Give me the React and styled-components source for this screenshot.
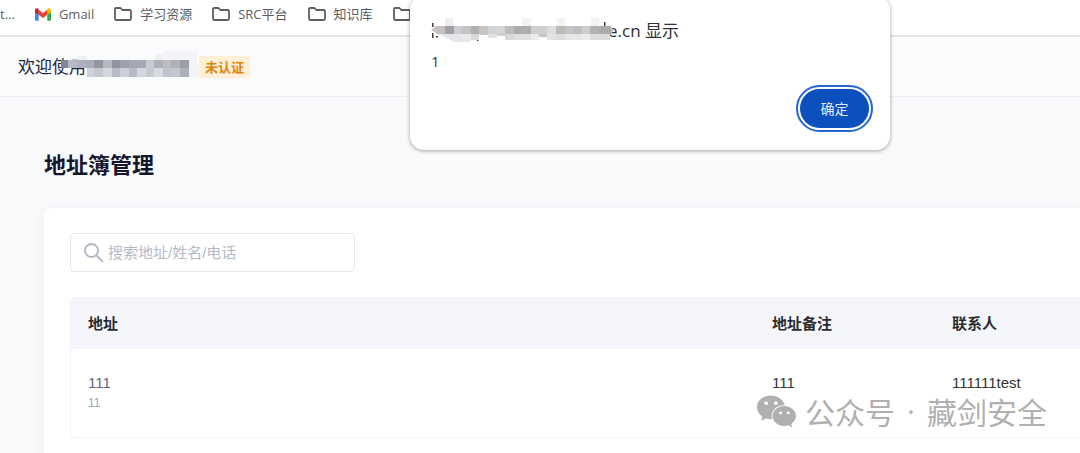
import React from "react";
import styled, { createGlobalStyle } from "styled-components";
import { FaWeixin } from "react-icons/fa";

const bookmarks = ["学习资源", "SRC平台", "知识库", "工具"];

const addresses = [{ id: 1, address: "111", detail: "11", remark: "111", contact: "111111test" }];

// [x, y, width, height, color]
const siteNameBlocks = [
  [94, 3, 34, 6, "#f0f1f4"],
  [102, 0, 34, 9, "#f3f4f7"],
  [119, 9, 18, 17, "#f3f4f6"],
  [17, 5, 9, 4, "#eef0f3"],
  [0, 9, 7, 8, "#85858f"],
  [7, 9, 9, 8, "#b6b9c6"],
  [16, 9, 8, 8, "#aeb1bd"],
  [24, 9, 9, 8, "#abadb9"],
  [33, 9, 9, 8, "#94949f"],
  [42, 9, 9, 8, "#b5b8c4"],
  [51, 9, 8, 8, "#92939e"],
  [59, 9, 9, 8, "#9da0ac"],
  [68, 9, 17, 8, "#a6a9b4"],
  [85, 9, 8, 8, "#c9cbd1"],
  [93, 9, 9, 8, "#aeb0b9"],
  [102, 9, 8, 8, "#c0bbc2"],
  [110, 9, 9, 8, "#adb1bb"],
  [26, 17, 7, 9, "#ccd2dd"],
  [33, 17, 9, 9, "#c3c7d0"],
  [42, 17, 9, 9, "#d5d7dd"],
  [51, 17, 8, 9, "#b8bcc8"],
  [59, 17, 9, 9, "#cbcfd7"],
  [68, 17, 8, 9, "#b8bbc5"],
  [76, 17, 9, 9, "#d5d7dd"],
  [85, 17, 8, 9, "#c8cad1"],
  [93, 17, 9, 9, "#d9dae0"],
  [102, 17, 8, 9, "#c1c3cc"],
  [110, 17, 9, 9, "#c2c6cf"],
  [119, 9, 9, 8, "#9b9da7"],
  [119, 17, 9, 9, "#adb0bb"],
];

const hostBlocks = [
  [14, 0, 8, 8, "#eeeeef"],
  [91, 0, 9, 8, "#f2f2f3"],
  [126, 0, 8, 8, "#f2f2f3"],
  [160, 0, 8, 8, "#f2f2f3"],
  [5, 8, 9, 8, "#c6c1be"],
  [14, 8, 9, 8, "#a0a2aa"],
  [23, 8, 8, 8, "#cccdd1"],
  [31, 8, 9, 8, "#c5c3c1"],
  [40, 8, 8, 8, "#afb0b3"],
  [48, 8, 9, 8, "#c7c4c1"],
  [57, 8, 9, 8, "#cfd2d7"],
  [66, 8, 8, 8, "#d7d5d3"],
  [74, 8, 9, 8, "#bdbdbe"],
  [83, 8, 17, 8, "#acadaf"],
  [100, 8, 16, 8, "#cdced0"],
  [116, 8, 9, 8, "#dcdde0"],
  [125, 8, 9, 8, "#bdb9b6"],
  [134, 8, 8, 8, "#c1c4ca"],
  [142, 8, 9, 8, "#bebebe"],
  [151, 8, 8, 8, "#cecdca"],
  [159, 8, 9, 8, "#b1b2b4"],
  [168, 8, 12, 8, "#a9abad"],
  [31, 16, 9, 8, "#ebe9e8"],
  [40, 16, 8, 6, "#d8d9db"],
  [57, 16, 9, 4, "#e0e2e5"],
  [74, 16, 9, 6, "#d9d9d9"],
  [83, 16, 17, 6, "#e0e0e1"],
  [100, 16, 8, 6, "#eceae8"],
  [116, 16, 9, 6, "#e3e3e5"],
  [125, 16, 9, 6, "#dedddc"],
  [134, 16, 17, 6, "#e7e7e8"],
  [151, 16, 8, 6, "#edecea"],
  [159, 16, 20, 6, "#dcdcdd"],
];

const Blocks = ({ data }) =>
  data.map(([x, y, w, h, fill], index) => <rect key={index} x={x} y={y} width={w} height={h} fill={fill} />);

const GmailIcon = () => (
  <svg width="16" height="13" viewBox="0 0 16 13" aria-hidden="true">
    <path d="M0 2v9.500c0 .8.6 1.300 1.300 1.300h2.400V5.500L0 2.700z" fill="#4285f4" />
    <path d="M12.300 5.500v7.300h2.400c.7 0 1.300-.5 1.300-1.300V2.700z" fill="#34a853" />
    <path d="M12.300 1.700v5L16 3.900V2.100c0-1.700-1.900-2.500-3.200-1.500z" fill="#fbbc04" />
    <path d="M3.700 6.700v-5L8 5l4.300-3.300v5L8 10z" fill="#ea4335" />
    <path d="M0 2.100v1.800l3.700 2.800v-5L3.200.6C1.900-.4 0 .4 0 2.100z" fill="#c5221f" />
  </svg>
);

const FolderIcon = () => (
  <svg width="18" height="14" viewBox="0 0 18 14" fill="none" aria-hidden="true">
    <path
      d="M1 2.200C1 1.500 1.500 1 2.200 1h4.300l1.800 2h7.500c.7 0 1.200.5 1.200 1.200v7.600c0 .7-.5 1.200-1.200 1.200H2.200c-.7 0-1.200-.5-1.200-1.200z"
      stroke="#5c5e60"
      strokeWidth="1.800"
      strokeLinejoin="round"
    />
  </svg>
);

const SearchIcon = () => (
  <svg width="20" height="20" viewBox="0 0 20 20" fill="none" stroke="#b1b7c6" aria-hidden="true">
    <circle cx="7.500" cy="7.500" r="6.500" strokeWidth="1.900" />
    <path d="M12.200 12.200 19 19" strokeWidth="1.900" />
  </svg>
);

const App = () => {
  return (
    <>
      <GlobalStyle />
      <Page>
        <BookmarkBar>
          <Bookmark href="#">t...</Bookmark>
          <Bookmark href="#">
            <GmailIcon />
            Gmail
          </Bookmark>
          {bookmarks.map((name) => (
            <Bookmark key={name} href="#">
              <FolderIcon />
              {name}
            </Bookmark>
          ))}
        </BookmarkBar>

        <Header>
          <Welcome>欢迎使用</Welcome>
          <SiteName width="138" height="27" viewBox="0 0 138 27" shapeRendering="crispEdges" aria-hidden="true">
            <Blocks data={siteNameBlocks} />
          </SiteName>
          <Tag>未认证</Tag>
        </Header>

        <Main>
          <Title>地址簿管理</Title>
          <Card>
            <SearchBox>
              <SearchIcon />
              <input type="text" aria-label="搜索" placeholder="搜索地址/姓名/电话" />
            </SearchBox>
            <TableFrame>
              <Table>
                <thead>
                  <tr>
                    <Th>地址</Th>
                    <Th $width="180px">地址备注</Th>
                    <Th $width="145px">联系人</Th>
                  </tr>
                </thead>
                <tbody>
                  {addresses.map((item) => (
                    <tr key={item.id}>
                      <Td $muted>
                        {item.address}
                        <Detail>{item.detail}</Detail>
                      </Td>
                      <Td>{item.remark}</Td>
                      <Td>{item.contact}</Td>
                    </tr>
                  ))}
                </tbody>
              </Table>
            </TableFrame>
          </Card>
        </Main>

        <Dialog role="alertdialog" aria-labelledby="dialog-title" aria-describedby="dialog-message">
          <DialogTitle id="dialog-title">
            <HostName width="184" height="27" viewBox="0 0 184 27" aria-hidden="true">
              <path d="M1 5h1.500v4H1zM1 15h1.500v5H1zM5 18h2v1.500H5zM46 19h1.500v4H46zM173 4h1.500v5H173z" fill="#4a3b35" />
              <path d="M0 12l5-4h174l4 4-4 5-6 4h-14l-154-6z" fill="#c6c6c6" />
              <path d="M7 16h33v6l-3 2H24z" fill="#e4e5e8" />
              <Blocks data={hostBlocks} />
            </HostName>
            e.cn 显示
          </DialogTitle>
          <DialogMessage id="dialog-message">1</DialogMessage>
          <ConfirmButton type="button">确定</ConfirmButton>
        </Dialog>

        <Watermark>
          <FaWeixin />
          <span>公众号</span>
          <Dot>·</Dot>
          <span>藏剑安全</span>
        </Watermark>
      </Page>
    </>
  );
};

const GlobalStyle = createGlobalStyle`
  * {
    box-sizing: border-box;
    margin: 0;
    padding: 0;
  }

  body {
    overflow: hidden;
    background-color: #f9fafc;
    font-family: "Open Sans", "Noto Sans CJK SC", sans-serif;
  }

  svg {
    flex-shrink: 0;
  }
`;

const Page = styled.div`
  position: relative;
  display: flex;
  flex-direction: column;
  min-height: 100vh;
  overflow: hidden;
`;

const BookmarkBar = styled.nav`
  display: flex;
  align-items: center;
  gap: 20px;
  height: 37px;
  padding-bottom: 7px;
  background-color: #fff;
  border-bottom: 2px solid #e4e5e7;
`;

const Bookmark = styled.a`
  display: flex;
  align-items: center;
  gap: 8px;
  color: #5a5c5f;
  font-size: 13px;
  line-height: 20px;
  text-decoration: none;
  white-space: nowrap;
`;

const Header = styled.header`
  display: flex;
  align-items: center;
  height: 60px;
  padding: 0 18px;
  background-color: #fafbfd;
  border-bottom: 1px solid #f0f1f4;
`;

const Welcome = styled.span`
  color: #23263a;
  font-size: 17px;
  line-height: 24px;
`;

const SiteName = styled.svg`
  position: relative;
  margin-left: -25px;
  margin-bottom: 4px;
`;

const Tag = styled.span`
  padding: 0 6px;
  border-radius: 2px;
  background-color: #ffefd6;
  color: #e08307;
  font-size: 13px;
  font-weight: 700;
  line-height: 22px;
`;

const Main = styled.main`
  display: flex;
  flex: 1;
  flex-direction: column;
  padding: 51px 0 0 44px;
`;

const Title = styled.h1`
  margin-bottom: 28px;
  color: #14162e;
  font-size: 22px;
  line-height: 32px;
`;

const Card = styled.section`
  flex: 1;
  padding: 25px 0 16px 26px;
  border-top-left-radius: 8px;
  background-color: #fff;
  box-shadow: 0 4px 16px rgba(30, 40, 70, 0.06);
`;

const SearchBox = styled.label`
  display: flex;
  align-items: center;
  gap: 4px;
  width: 285px;
  height: 39px;
  margin-bottom: 25px;
  padding: 0 13px;
  border: 1px solid #e4e7f0;
  border-radius: 4px;

  input {
    flex: 1;
    min-width: 0;
    border: none;
    outline: none;
    background: none;
    color: #333;
    font-family: "Liberation Sans", "Noto Sans CJK SC", sans-serif;
    font-size: 15px;

    &::placeholder {
      color: #b5bac9;
    }
  }
`;

const TableFrame = styled.div`
  overflow: hidden;
  border: 1px solid #f1f3f8;
  border-right: none;
  border-radius: 4px 0 0 4px;
`;

const Table = styled.table`
  width: 100%;
  border-collapse: collapse;
  table-layout: fixed;
  font-family: "Liberation Sans", "Noto Sans CJK SC", sans-serif;
`;

const Th = styled.th`
  width: ${({ $width }) => $width || "auto"};
  height: 51px;
  padding: 0 17px 2px;
  background-color: #f4f6fb;
  color: #292a2c;
  font-size: 15px;
  text-align: left;
`;

const Td = styled.td`
  height: 86px;
  padding: 23px 17px;
  color: ${({ $muted }) => ($muted ? "#626882" : "#333")};
  font-size: 15px;
  line-height: 21px;
  vertical-align: top;
`;

const Detail = styled.div`
  color: #a2a8b8;
  font-size: 12px;
`;

const Dialog = styled.div`
  position: absolute;
  top: -4px;
  left: 410px;
  display: flex;
  flex-direction: column;
  width: 480px;
  padding: 19px 21px 22px;
  border-radius: 14px;
  background-color: #fff;
  box-shadow: 0 1px 4px rgba(0, 0, 0, 0.36);
`;

const DialogTitle = styled.h2`
  display: flex;
  align-items: center;
  color: #303134;
  font-size: 17px;
  font-weight: 400;
  line-height: 32px;
`;

const HostName = styled.svg`
  position: relative;
  z-index: 1;
  margin-right: -7px;
`;

const DialogMessage = styled.p`
  color: #3c3d42;
  font-size: 15px;
  line-height: 28px;
`;

const ConfirmButton = styled.button`
  align-self: flex-end;
  width: 69px;
  height: 39px;
  margin-top: 14px;
  padding-bottom: 2px;
  border: none;
  border-radius: 20px;
  outline: 2px solid #2666d3;
  outline-offset: 2px;
  background-color: #0b50bd;
  color: #e2ecff;
  font-family: inherit;
  font-size: 14px;
`;

const Watermark = styled.div`
  position: absolute;
  right: 33px;
  bottom: 23px;
  display: flex;
  align-items: center;
  gap: 12px;
  color: #b0b0b0;
  font-family: "Noto Sans CJK SC", sans-serif;
  font-size: 30px;
  font-weight: 400;
  line-height: 40px;

  svg {
    width: 41px;
    height: 37px;
    margin-right: -4px;
  }
`;

const Dot = styled.span`
  font-family: "Open Sans", sans-serif;
`;

export default App;
